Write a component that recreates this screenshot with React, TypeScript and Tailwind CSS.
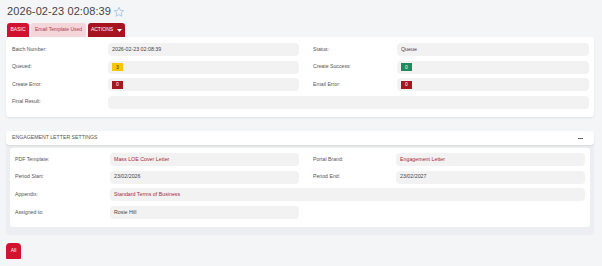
import React from "react";

const font = { fontFamily: '"Liberation Sans", Arial, sans-serif' };

function Box({ w, children, red }: { w?: string; children?: React.ReactNode; red?: boolean }) {
  return (
    <div
      className={`${w ?? "flex-1"} h-[13px] rounded-[4px] bg-[#f2f2f3] flex items-center pl-[4px] text-[5.3px] ${
        red ? "text-[#a8283a]" : "text-[#444]"
      }`}
    >
      {children}
    </div>
  );
}

function Badge({ color, children }: { color: string; children: React.ReactNode }) {
  return (
    <div className={`${color} w-[11px] h-[8px] flex items-center justify-center text-[5px] leading-none`}>{children}</div>
  );
}

function Label({ w, children }: { w: string; children: React.ReactNode }) {
  return <div className={`${w} text-[5.2px] text-[#555]`}>{children}</div>;
}

export default function App() {
  return (
    <div className="w-[602px] h-[266px] bg-[#f4f5f7] overflow-hidden" style={font}>
      {/* Title */}
      <div className="pt-[5px] pl-[7px] flex items-center h-[18px]">
        <span className="text-[11px] leading-[13px] text-[#444] tracking-[0.1px]">2026-02-23 02:08:39</span>
        <svg width="12" height="12" viewBox="0 0 24 24" className="ml-[2px]">
          <path
            d="M12 2.5l2.9 6.2 6.6.7-5 4.5 1.4 6.6L12 17.2l-5.9 3.3 1.4-6.6-5-4.5 6.6-.7z"
            fill="none"
            stroke="#a8c4e6"
            strokeWidth="1.8"
            strokeLinejoin="round"
          />
        </svg>
      </div>
      {/* Tabs */}
      <div className="pl-[7px] flex gap-[2px] h-[19px] items-end">
        <div className="w-[22px] h-[14px] rounded-t-[3px] bg-[#d2132f] text-white text-[5px] flex items-center justify-center">
          BASIC
        </div>
        <div className="w-[55px] h-[14px] rounded-t-[3px] bg-[#f3d5da] text-[#b23a4c] text-[5px] flex items-center justify-center">
          Email Template Used
        </div>
        <div className="w-[37px] h-[14px] rounded-t-[3px] bg-[#a5141f] text-white text-[5px] flex items-center justify-center gap-[4px]">
          ACTIONS
          <svg width="5" height="3" viewBox="0 0 5 3">
            <path d="M0 0h5L2.5 3z" fill="#fff" />
          </svg>
        </div>
      </div>
      {/* Card 1 */}
      <div className="ml-[6px] w-[588px] h-[80px] bg-white rounded-[3px] shadow-[0_1px_2px_rgba(0,0,0,0.08)] pt-[6px] pl-[6px] pr-[5px] flex flex-col gap-[4.5px]">
        <div className="flex items-center">
          <Label w="w-[96px]">Batch Number:</Label>
          <Box w="w-[191px]">2026-02-23 02:08:39</Box>
          <div className="w-[14px]" />
          <Label w="w-[84px]">Status:</Label>
          <Box w="w-[192px]">Queue</Box>
        </div>
        <div className="flex items-center">
          <Label w="w-[96px]">Queued:</Label>
          <Box w="w-[191px]">
            <Badge color="bg-[#f7c600] text-[#333]">3</Badge>
          </Box>
          <div className="w-[14px]" />
          <Label w="w-[84px]">Create Success:</Label>
          <Box w="w-[192px]">
            <Badge color="bg-[#1f8a5c] text-white">0</Badge>
          </Box>
        </div>
        <div className="flex items-center">
          <Label w="w-[96px]">Create Error:</Label>
          <Box w="w-[191px]">
            <Badge color="bg-[#a3191f] text-white">0</Badge>
          </Box>
          <div className="w-[14px]" />
          <Label w="w-[84px]">Email Error:</Label>
          <Box w="w-[192px]">
            <Badge color="bg-[#a3191f] text-white">0</Badge>
          </Box>
        </div>
        <div className="flex items-center">
          <Label w="w-[96px]">Final Result:</Label>
          <Box />
        </div>
      </div>
      {/* Section 2 */}
      <div className="mt-[14px] ml-[6px] w-[588px] h-[104px] bg-[#eceef1] rounded-[3px] flex flex-col">
        <div className="h-[14px] bg-white rounded-[3px] shadow-[0_1px_2px_rgba(0,0,0,0.1)] flex items-center justify-between pl-[6px] pr-[11px]">
          <span className="text-[5.2px] text-[#555]">ENGAGEMENT LETTER SETTINGS</span>
          <div className="w-[5px] h-[1px] bg-[#666]" />
        </div>
        <div className="mt-[3px] mx-[4px] h-[79px] bg-white rounded-[3px] pt-[5px] pl-[5px] pr-[5px] flex flex-col gap-[4.7px]">
          <div className="flex items-center">
            <Label w="w-[95px]">PDF Template:</Label>
            <Box w="w-[189px]" red>Mass LOE Cover Letter</Box>
            <div className="w-[14px]" />
            <Label w="w-[83px]">Portal Brand:</Label>
            <Box w="w-[189px]" red>Engagement Letter</Box>
          </div>
          <div className="flex items-center">
            <Label w="w-[95px]">Period Start:</Label>
            <Box w="w-[189px]">23/02/2026</Box>
            <div className="w-[14px]" />
            <Label w="w-[83px]">Period End:</Label>
            <Box w="w-[189px]">23/02/2027</Box>
          </div>
          <div className="flex items-center">
            <Label w="w-[95px]">Appendix:</Label>
            <Box red>Standard Terms of Business</Box>
          </div>
          <div className="flex items-center">
            <Label w="w-[95px]">Assigned to:</Label>
            <Box w="w-[189px]">Rosie Hill</Box>
          </div>
        </div>
      </div>
      {/* All button */}
      <div className="mt-[8px] ml-[6px] w-[15px] h-[16px] rounded-t-[4px] rounded-b-[1px] bg-[#d2132f] text-white text-[5px] flex items-center justify-center">
        All
      </div>
    </div>
  );
}
